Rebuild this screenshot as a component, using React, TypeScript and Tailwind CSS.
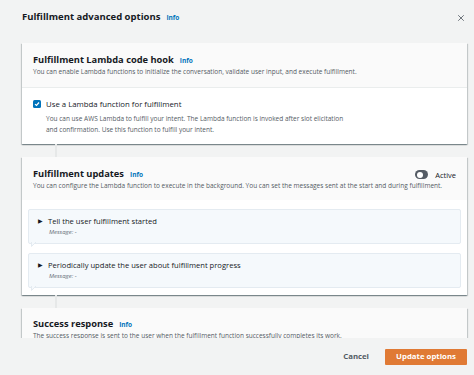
import { X } from "lucide-react";

function Info() {
  return <span className="ml-[6px] text-[6.5px] font-bold text-[#0073bb]">Info</span>;
}

function Connector() {
  return (
    <div className="h-[13px] pl-[33px]">
      <div className="h-full w-[2px] bg-[#e6e8e8]" />
    </div>
  );
}

function Toggle() {
  return (
    <div className="flex h-[9px] w-[13px] items-center rounded-full bg-[#545b64] px-[1.5px]">
      <div className="h-[6px] w-[6px] rounded-full bg-white" />
    </div>
  );
}

function MessageItem({ label }: { label: string }) {
  return (
    <div className="relative h-[35px] rounded-[2px] border border-[#e4ebf1] bg-[#f5f9fc] pl-[9px] pt-[5px]">
      <div className="flex items-center gap-[5px] text-[7.6px] leading-[12px] text-[#16191f]">
        <span className="text-[6px]">▶</span>
        <span>{label}</span>
      </div>
      <div className="pl-[11px] text-[6px] italic leading-[10px] text-[#687078]">Message: -</div>
      <svg className="absolute -bottom-[4px] left-[2px]" width="6" height="5" viewBox="0 0 6 5">
        <path d="M0.5 0 L0.5 4.5 L5 0" fill="#f5f9fc" stroke="#e4ebf1" strokeWidth="1" />
      </svg>
    </div>
  );
}

const card =
  "bg-white shadow-[0_1px_1px_0_rgba(0,28,36,0.3),1px_1px_1px_0_rgba(0,28,36,0.15),-1px_1px_1px_0_rgba(0,28,36,0.15)]";

export default function App() {
  return (
    <div className="flex h-[375px] w-[474px] flex-col overflow-hidden bg-[#f2f3f3] font-['Open_Sans',sans-serif] text-[#16191f]">
      <div className="flex h-[35px] shrink-0 items-center justify-between pl-[22px] pr-[8px]">
        <div className="flex items-baseline">
          <span className="text-[9.5px] font-bold">Fulfillment advanced options</span>
          <Info />
        </div>
        <X className="h-[10px] w-[10px] text-[#545b64]" strokeWidth={2} />
      </div>

      <div className="flex-1 overflow-hidden px-[22px] pt-[8px] pr-[7px]">
        {/* Lambda code hook */}
        <div className={card}>
          <div className="border-b border-[#eaeded] bg-[#fafafa] px-[11px] pb-[10px] pt-[11px]">
            <div className="flex items-baseline leading-[12px]">
              <span className="text-[9.3px] font-bold">Fulfillment Lambda code hook</span>
              <Info />
            </div>
            <div className="text-[6.5px] leading-[10px] text-[#545b64]">
              You can enable Lambda functions to initialize the conversation, validate user input, and execute fulfillment.
            </div>
          </div>
          <div className="px-[11px] pb-[9px] pt-[11px]">
            <div className="flex items-center gap-[5px] leading-[10px]">
              <div className="flex h-[8px] w-[8px] items-center justify-center rounded-[1.5px] bg-[#0073bb]">
                <svg width="6" height="6" viewBox="0 0 6 6">
                  <path d="M1 3.1 L2.5 4.5 L5 1.5" fill="none" stroke="white" strokeWidth="1.2" />
                </svg>
              </div>
              <span className="text-[7.8px]">Use a Lambda function for fulfillment</span>
            </div>
            <div className="mt-[4px] pl-[13px] text-[6.5px] leading-[11px] text-[#545b64]">
              You can use AWS Lambda to fulfill your intent. The Lambda function is invoked after slot elicitation
              <br />
              and confirmation. Use this function to fulfill your intent.
            </div>
          </div>
        </div>

        <Connector />

        {/* Fulfillment updates */}
        <div className={card}>
          <div className="bg-[#fafafa] px-[11px] pb-[9px] pt-[11px]">
            <div className="flex items-center justify-between leading-[12px]">
              <div className="flex items-baseline">
                <span className="text-[9.3px] font-bold">Fulfillment updates</span>
                <Info />
              </div>
              <div className="flex items-center gap-[7px]">
                <Toggle />
                <span className="text-[7.5px]">Active</span>
              </div>
            </div>
            <div className="text-[6.5px] leading-[10px] text-[#545b64]">
              You can configure the Lambda function to execute in the background. You can set the messages sent at the start and during fulfillment.
            </div>
          </div>
          <div className="flex flex-col gap-[9px] px-[6px] pb-[7px] pt-[9px]">
            <MessageItem label="Tell the user fulfillment started" />
            <MessageItem label="Periodically update the user about fulfillment progress" />
          </div>
        </div>

        <Connector />

        {/* Success response */}
        <div className={card}>
          <div className="bg-[#fafafa] px-[11px] pb-[10px] pt-[10px]">
            <div className="flex items-baseline leading-[12px]">
              <span className="text-[9.3px] font-bold">Success response</span>
              <Info />
            </div>
            <div className="text-[6.5px] leading-[9px] text-[#545b64]">
              The success response is sent to the user when the fulfillment function successfully completes its work.
            </div>
          </div>
        </div>
      </div>

      <div className="flex h-[37px] shrink-0 items-center justify-end gap-[16px] pr-[7px]">
        <span className="text-[7.8px] font-bold text-[#545b64]">Cancel</span>
        <button className="h-[16px] w-[82px] rounded-[1px] bg-[#e07a35] text-[7.8px] font-bold text-white">
          Update options
        </button>
      </div>
    </div>
  );
}
